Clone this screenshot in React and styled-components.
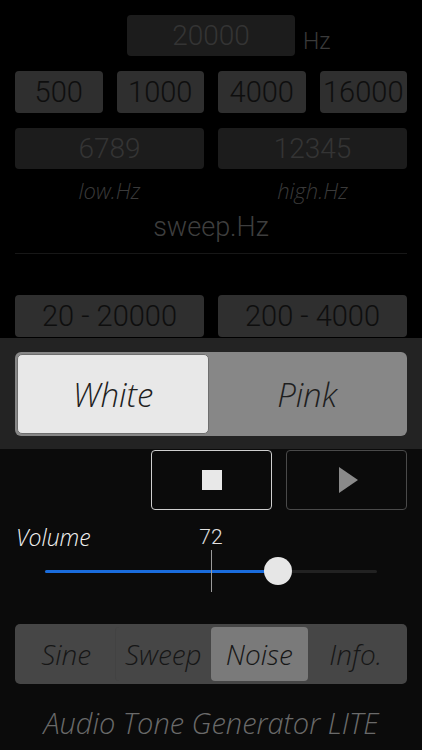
import styled, { createGlobalStyle } from 'styled-components'

const Global = createGlobalStyle`
    html, body {
        margin: 0;
        padding: 0;
        background: #0b0b0b;
    }
    * {
        box-sizing: border-box;
    }
`

const thin = `"Roboto", "Liberation Sans", sans-serif`
const round = `"Open Sans", "Noto Sans", sans-serif`

const volume = 72
// the thumb travels inside the track, so it stops 14px short of each end
const thumbAt = `calc(14px + (100% - 28px) * ${volume / 100})`

export default function App() {
    return (
        <Screen>
            <Global />
            <Top>
                <FreqRow>
                    <span />
                    <Field>20000</Field>
                    <Unit>Hz</Unit>
                </FreqRow>
                <Grid cols={4} gap={15}>
                    <Preset>500</Preset>
                    <Preset>1000</Preset>
                    <Preset>4000</Preset>
                    <Preset>16000</Preset>
                </Grid>
                <Grid cols={2} gap={15}>
                    <Field>6789</Field>
                    <Field>12345</Field>
                </Grid>
                <Grid cols={2} gap={10}>
                    <Caption>low.Hz</Caption>
                    <Caption>high.Hz</Caption>
                </Grid>
                <SweepTitle>sweep.Hz</SweepTitle>
                <Divider />
                <Grid cols={2} gap={41}>
                    <Preset>20 - 20000</Preset>
                    <Preset>200 - 4000</Preset>
                </Grid>
            </Top>

            <Panel>
                <Segmented>
                    <Segment active>White</Segment>
                    <Segment>Pink</Segment>
                </Segmented>
            </Panel>

            <Bottom>
                <Transport>
                    <TransportButton bright>
                        <StopIcon />
                    </TransportButton>
                    <TransportButton>
                        <svg width="19" height="26" viewBox="0 0 19 26">
                            <polygon points="0,0 19,13 0,26" fill="#8a8a8a" />
                        </svg>
                    </TransportButton>
                </Transport>

                <VolumeHead>
                    <VolumeLabel>Volume</VolumeLabel>
                    <VolumeValue>{volume}</VolumeValue>
                </VolumeHead>
                <Slider>
                    <Track>
                        <Fill style={{ width: thumbAt }} />
                    </Track>
                    <Tick />
                    <Thumb style={{ left: thumbAt }} />
                </Slider>

                <Tabs>
                    <Tab>Sine</Tab>
                    <Tab split>Sweep</Tab>
                    <Tab active>Noise</Tab>
                    <Tab>Info.</Tab>
                </Tabs>

                <AppTitle>Audio Tone Generator LITE</AppTitle>
            </Bottom>
        </Screen>
    )
}

const Screen = styled.div`
    width: 422px;
    height: 750px;
    display: flex;
    flex-direction: column;
    overflow: hidden;
    background: #0b0b0b;
`

const Top = styled.div`
    background: #000;
    height: 338px;
    padding: 15px 15px 0;
    display: flex;
    flex-direction: column;
`

const FreqRow = styled.div`
    display: grid;
    grid-template-columns: 1fr 168px 1fr;
    align-items: end;
    height: 41px;
`

const Field = styled.div`
    height: 41px;
    background: #1c1c1c;
    border-radius: 4px;
    color: #343434;
    font-family: ${thin};
    font-weight: 300;
    font-size: 28px;
    display: flex;
    align-items: center;
    justify-content: center;
`

const Unit = styled.div`
    color: #3a3a3a;
    font-family: ${thin};
    font-weight: 300;
    font-size: 23px;
    padding-left: 8px;
    line-height: 1;
    margin-bottom: 3px;
`

const Grid = styled.div`
    display: grid;
    grid-template-columns: repeat(${p => p.cols}, 1fr);
    column-gap: 14px;
    margin-top: ${p => p.gap}px;
`

const Preset = styled.div`
    height: 42px;
    background: #2f2f2f;
    border-radius: 4px;
    color: #0e0e0e;
    font-family: ${thin};
    font-weight: 300;
    font-size: 29px;
    display: flex;
    align-items: center;
    justify-content: center;
`

const Caption = styled.div`
    text-align: center;
    color: #3a3a3a;
    font-family: ${round};
    font-weight: 300;
    font-style: italic;
    font-size: 22px;
    line-height: 22px;
`

const SweepTitle = styled.div`
    margin-top: 11px;
    text-align: center;
    color: #3e3e3e;
    font-family: ${thin};
    font-weight: 300;
    font-size: 27px;
    line-height: 30px;
`

const Divider = styled.div`
    height: 1px;
    background: #171717;
    margin-top: 11px;
`

const Panel = styled.div`
    background: #232323;
    height: 111px;
    padding: 14px 15px 0;
`

const Segmented = styled.div`
    height: 84px;
    background: #878787;
    border-radius: 6px;
    padding: 2px;
    display: grid;
    grid-template-columns: 192px 1fr;
`

const Segment = styled.div`
    display: flex;
    align-items: center;
    justify-content: center;
    border-radius: 5px;
    background: ${p => (p.active ? '#e8e8e8' : 'transparent')};
    border: ${p => (p.active ? '1px solid #6e6e6e' : 'none')};
    color: #1e1e1e;
    font-family: ${round};
    font-weight: 300;
    font-style: italic;
    font-size: 33px;
`

const Bottom = styled.div`
    flex: 1;
    background: #0b0b0b;
    padding: 1px 15px 0;
    display: flex;
    flex-direction: column;
`

const Transport = styled.div`
    display: flex;
    justify-content: flex-end;
    gap: 14px;
`

const TransportButton = styled.div`
    width: 121px;
    height: 60px;
    border-radius: 4px;
    border: 1px solid ${p => (p.bright ? '#cfcfcf' : '#4a4a4a')};
    display: flex;
    align-items: center;
    justify-content: center;
    padding-left: ${p => (p.bright ? '0' : '4px')};
`

const StopIcon = styled.div`
    width: 20px;
    height: 20px;
    background: #e8e8e8;
`

const VolumeHead = styled.div`
    display: grid;
    grid-template-columns: 1fr auto 1fr;
    align-items: center;
    margin-top: 11px;
    height: 24px;
`

const VolumeLabel = styled.div`
    color: #f2f2f2;
    font-family: ${round};
    font-weight: 300;
    font-style: italic;
    font-size: 23px;
    margin-left: 1px;
`

const VolumeValue = styled.div`
    color: #e0e0e0;
    font-family: ${thin};
    font-weight: 300;
    font-size: 21px;
`

const Slider = styled.div`
    position: relative;
    height: 44px;
    margin: 4px 30px 0;
    display: flex;
    align-items: center;
`

const Track = styled.div`
    width: 100%;
    height: 3px;
    border-radius: 2px;
    background: #222;
`

const Fill = styled.div`
    height: 100%;
    background: #1a6cdc;
    border-radius: 2px;
`

const Tick = styled.div`
    position: absolute;
    left: calc(50% - 0.5px);
    top: 1px;
    width: 1px;
    height: 42px;
    background: #9a9a9a;
`

const Thumb = styled.div`
    position: absolute;
    top: 50%;
    width: 28px;
    height: 28px;
    margin: -14px 0 0 -14px;
    border-radius: 50%;
    background: #e6e6e6;
`

const Tabs = styled.div`
    margin-top: 31px;
    height: 60px;
    background: #464646;
    border-radius: 5px;
    padding: 3px;
    display: grid;
    grid-template-columns: repeat(4, 1fr);
`

const Tab = styled.div`
    display: flex;
    align-items: center;
    justify-content: center;
    border-radius: 4px;
    background: ${p => (p.active ? '#7a7a7a' : 'transparent')};
    border-left: ${p => (p.split ? '1px solid #424242' : 'none')};
    color: #161616;
    font-family: ${round};
    font-weight: 300;
    font-style: italic;
    font-size: 28px;
`

const AppTitle = styled.div`
    margin-top: 23px;
    text-align: center;
    color: #6a6a6a;
    font-family: ${round};
    font-weight: 300;
    font-style: italic;
    font-size: 29px;
    line-height: 32px;
`
